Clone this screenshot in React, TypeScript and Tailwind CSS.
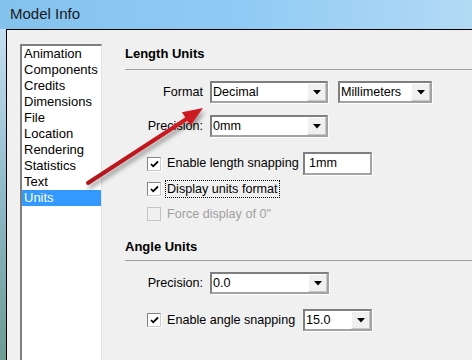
import React from 'react'

const items = [
  'Animation',
  'Components',
  'Credits',
  'Dimensions',
  'File',
  'Location',
  'Rendering',
  'Statistics',
  'Text',
  'Units',
]

function Caret() {
  return (
    <svg width="8" height="5" viewBox="0 0 8 5">
      <polygon points="0,0 8,0 4,4.5" fill="#000" />
    </svg>
  )
}

function Select({ value, width }: { value: string; width: string }) {
  return (
    <div
      className={`${width} h-[22px] flex items-stretch bg-white border-2 border-[#7f7f7f] border-r-[#a3a3a3] border-b-[#a3a3a3] shadow-[1px_1px_0_#ffffff]`}
    >
      <span className="flex-1 flex items-center pl-[1px] text-black">{value}</span>
      <div className="w-[19px] flex items-center justify-center bg-[#f0f0f0] border-l border-t border-white border-r border-b border-r-[#c8c8c8] border-b-[#c8c8c8]">
        <Caret />
      </div>
    </div>
  )
}

function Checkbox({ checked, disabled }: { checked?: boolean; disabled?: boolean }) {
  return (
    <div
      className={`w-[14px] h-[14px] shrink-0 flex items-center justify-center border ${
        disabled
          ? 'bg-[#f0f0f0] border-[#c4c4c4]'
          : 'bg-white border-[#848484] border-r-[#c9c9c9] border-b-[#c9c9c9] shadow-[1px_1px_0_#ffffff]'
      }`}
    >
      {checked && (
        <svg width="9" height="8" viewBox="0 0 9 8">
          <path d="M1 4 L3.2 6.3 L8 1.5" stroke="#000" strokeWidth="1.8" fill="none" />
        </svg>
      )}
    </div>
  )
}

function Label({ children }: { children: React.ReactNode }) {
  return <div className="w-[56px] text-right mr-[7px] whitespace-nowrap">{children}</div>
}

export default function App() {
  return (
    <div
      className="relative w-[472px] h-[360px] overflow-hidden bg-[#f0f0f0] text-[12.6px] text-black"
      style={{ fontFamily: '"Liberation Sans", Arial, sans-serif' }}
    >
      <div className="h-[29px] flex items-center pl-[10px] bg-gradient-to-r from-[#84c2ee] via-[#8ecaf4] to-[#b3daf5]">
        <span className="text-[15px] text-[#1a1a1a]">Model Info</span>
      </div>

      <div className="flex h-[331px]">
        <div className="w-[7px] bg-gradient-to-b from-[#c4dff2] via-[#8fb9c9] to-[#6c9c92] border-r border-black" />

        <div className="flex-1 flex border-t border-black pl-[13px] pt-[14px]">
          <div className="w-[82px] bg-white border-l-2 border-t-2 border-[#7f7f7f] border-r border-r-[#e2e2e2]">
            {items.map((it) => (
              <div
                key={it}
                className={`h-[16px] leading-[16px] pl-[2px] text-[13px] ${
                  it === 'Units' ? 'bg-[#3399ff] text-white' : ''
                }`}
              >
                {it}
              </div>
            ))}
          </div>

          <div className="flex-1 flex flex-col pl-[23px] pt-[2px]">
            <div className="h-[16px] leading-[16px] font-bold text-[13px]">Length Units</div>
            <div className="mt-[7px] h-px bg-[#a0a0a0]" />

            <div className="mt-[11px] flex items-center pl-[22px]">
              <Label>Format</Label>
              <Select value="Decimal" width="w-[118px]" />
              <div className="ml-[10px]">
                <Select value="Millimeters" width="w-[94px]" />
              </div>
            </div>

            <div className="mt-[12px] flex items-center pl-[22px]">
              <Label>Precision:</Label>
              <Select value="0mm" width="w-[118px]" />
            </div>

            <div className="mt-[15px] h-[23px] flex items-center pl-[22px]">
              <Checkbox checked />
              <span className="ml-[6px] w-[131px] whitespace-nowrap">Enable length snapping</span>
              <div className="ml-[5px] w-[69px] h-[23px] flex items-center pl-[4px] bg-white border-2 border-[#7f7f7f] border-r-[#a3a3a3] border-b-[#a3a3a3] shadow-[1px_1px_0_#ffffff]">
                1mm
              </div>
            </div>

            <div className="mt-[5px] h-[18px] flex items-center pl-[22px]">
              <Checkbox checked />
              <span className="ml-[5px] px-[1px] leading-[16px] outline outline-1 outline-dotted outline-black whitespace-nowrap">
                Display units format
              </span>
            </div>

            <div className="mt-[7px] h-[18px] flex items-center pl-[22px] text-[#a0a0a0]">
              <Checkbox disabled />
              <span className="ml-[6px] whitespace-nowrap">Force display of 0"</span>
            </div>

            <div className="mt-[16px] h-[16px] leading-[16px] font-bold text-[13px]">Angle Units</div>
            <div className="mt-[5px] h-px bg-[#a0a0a0]" />

            <div className="mt-[11px] flex items-center pl-[22px]">
              <Label>Precision:</Label>
              <Select value="0.0" width="w-[119px]" />
            </div>

            <div className="mt-[15px] h-[22px] flex items-center pl-[22px]">
              <Checkbox checked />
              <span className="ml-[6px] w-[131px] whitespace-nowrap">Enable angle snapping</span>
              <div className="ml-[5px]">
                <Select value="15.0" width="w-[69px]" />
              </div>
            </div>
          </div>
        </div>
      </div>

      <svg className="absolute inset-0 pointer-events-none" width="472" height="360">
        <defs>
          <filter id="sh" x="-20%" y="-20%" width="140%" height="140%">
            <feDropShadow dx="2" dy="4" stdDeviation="2" floodColor="#000" floodOpacity="0.35" />
          </filter>
          <linearGradient id="ar" x1="0" y1="1" x2="1" y2="0">
            <stop offset="0" stopColor="#b0141a" />
            <stop offset="1" stopColor="#d11c22" />
          </linearGradient>
        </defs>
        <g filter="url(#sh)">
          <line x1="88" y1="183" x2="188" y2="118" stroke="url(#ar)" strokeWidth="4" strokeLinecap="round" />
          <polygon points="203,108 190.6,125.6 181.9,112.2" fill="#cc1a20" />
        </g>
      </svg>
    </div>
  )
}
